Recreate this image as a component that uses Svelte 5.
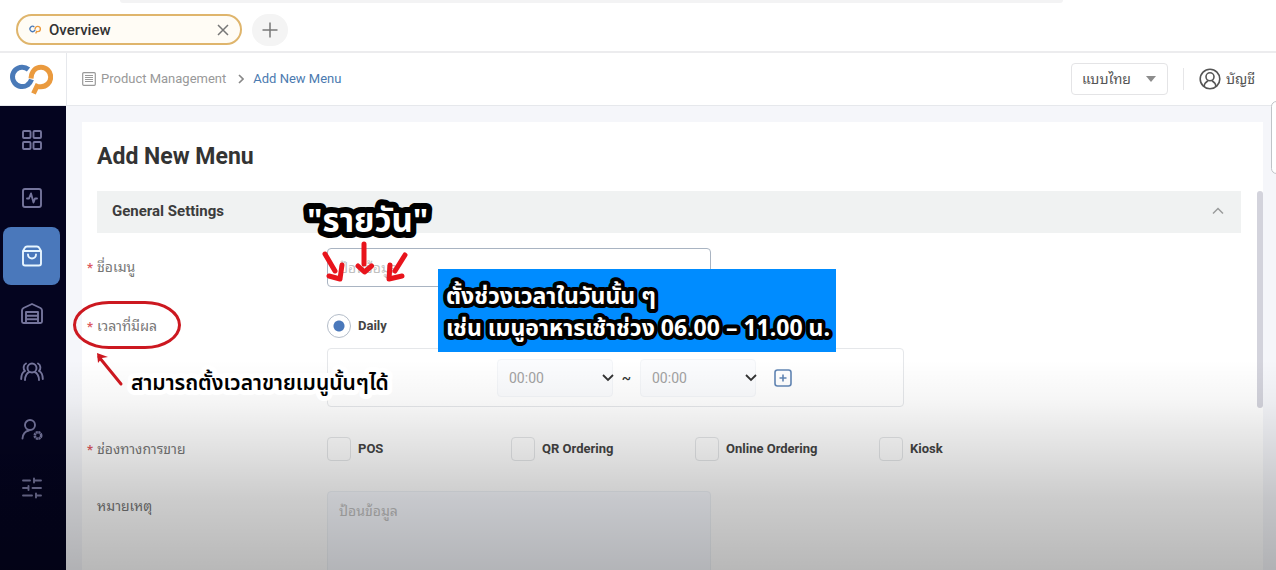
<script>
  const channels = ['POS', 'QR Ordering', 'Online Ordering', 'Kiosk'];
  const nav = ['Dashboard', 'Activity', 'Products', 'Warehouse', 'Customers', 'User settings', 'Preferences'];
  let active = $state(2);
  let open = $state(true);
</script>

{#snippet logo()}
  <svg class="logo" viewBox="0 0 44 32" fill="none" stroke-width="5" aria-hidden="true">
    <path stroke="#4a7ab8" d="M19.500 6.500A9.700 9.700 0 1 0 18.500 22Q21.500 19.500 22.500 16.500" />
    <path stroke="#ea9a3e" d="M22 15.500C22.500 8 26.500 4.300 32 4.300A9.700 9.700 0 0 1 32 23.700H27M29 21L24.500 30.500" />
  </svg>
{/snippet}

<div class="page">
  <div class="tabs">
    <div class="address"></div>
    <div class="tab">
      {@render logo()}
      <span>Overview</span>
      <button class="plain" aria-label="Close tab">
        <svg width="12" height="12" viewBox="0 0 12 12" fill="none" stroke="#777" stroke-width="1.5"><path d="M1 1l10 10M11 1L1 11" /></svg>
      </button>
    </div>
    <button class="newtab" aria-label="New tab">
      <svg width="16" height="16" viewBox="0 0 16 16" fill="none" stroke="#777" stroke-width="1.5"><path d="M8 .5v15M.5 8h15" /></svg>
    </button>
  </div>

  <header>
    <div class="brand">{@render logo()}</div>
    <nav class="crumbs" aria-label="Breadcrumb">
      <svg width="14" height="14" viewBox="0 0 14 14" fill="none" stroke="#999" stroke-width="1.2"><rect x=".7" y=".7" width="12.600" height="12.600" rx="1" /><path stroke-width="1" d="M3 3.500h8M3 5.500h8M3 7.500h8M3 9.500h8" /></svg>
      <a href="#products">Product Management</a>
      <svg class="sep" width="6" height="10" viewBox="0 0 6 10" fill="none" stroke="#888" stroke-width="1.6"><path d="M1 1l4 4-4 4" /></svg>
      <a class="here" href="#new">Add New Menu</a>
    </nav>
    <div class="lang">
      <select aria-label="Language"><option>แบบไทย</option></select>
      <svg width="12" height="8" viewBox="0 0 12 8"><path fill="#8c8c8c" d="M1 1h10L6 7z" /></svg>
    </div>
    <button class="account">
      <svg width="22" height="22" viewBox="0 0 22 22" fill="none" stroke="#555" stroke-width="1.600"><circle cx="11" cy="11" r="9.800" /><circle cx="11" cy="8.800" r="4" /><path d="M5 18.500c.5-3 2.500-5 4-5.800M17 18.500c-.5-3-2.500-5-4-5.800" /></svg>
      <span>บัญชี</span>
    </button>
  </header>

  <div class="body">
    <aside>
      {#each nav as name, i}
        <button class:active={active === i} aria-label={name} onclick={() => (active = i)}>
          <svg width="24" height="24" viewBox="0 0 24 24" fill="none" stroke="currentColor" stroke-width="1.900" stroke-linecap="round" stroke-linejoin="round">
            {#if i === 0}
              <rect x="3" y="3" width="7.500" height="7" rx="1" /><rect x="13.500" y="3" width="7.500" height="7" rx="1" /><rect x="3" y="14" width="7.500" height="7" rx="1" /><rect x="13.500" y="14" width="7.500" height="7" rx="1" />
            {:else if i === 1}
              <rect x="3" y="3" width="18" height="18" rx="2" /><path d="M7 12.500h2l2-5 2.500 9 1.500-4h2" />
            {:else if i === 2}
              <path d="M3 7h18v12.500a2 2 0 0 1-2 2H5a2 2 0 0 1-2-2zM3 7l2-3.500Q5.500 2.500 7 2.500h10q1.500 0 2 1L21 7M8 10.500a4 4 0 0 0 8 0" />
            {:else if i === 3}
              <path d="M6 21H3.500A1.500 1.500 0 0 1 2 19.500V8.500Q2 7 3.500 6L12 2l8.500 4Q22 7 22 8.500v11a1.500 1.500 0 0 1-1.500 1.500H18M6 21V10h12v11zM6 13.700h12M6 17.300h12" />
            {:else if i === 4}
              <circle cx="12" cy="8" r="4.500" /><path d="M5 20c0-4 2-7.500 4.500-8M19 20c0-4-2-7.500-4.500-8M6 3.500C3 5 3 9 5 11c-2 1-3.800 4-3.800 8M18 3.500c3 1.500 3 5.500 1 7.500 2 1 3.800 4 3.800 8" />
            {:else if i === 5}
              <circle cx="10" cy="7" r="5" /><path d="M2.500 20.500c.3-4 2.500-7.200 6.500-8" /><circle cx="18" cy="17.500" r="3.200" stroke-width="2.600" stroke-dasharray="2 .5" stroke-linecap="butt" />
            {:else}
              <path d="M3 4.500h7M14 2.500v4M14 4.500h7M3 12h5M8.500 10v4M12.500 12H21M3 19.500h9M16 17.500v4M16 19.500h5" />
            {/if}
          </svg>
        </button>
      {/each}
    </aside>

    <main>
      <section class="card">
        <h1>Add New Menu</h1>
        <button class="section" aria-expanded={open} onclick={() => (open = !open)}>
          <span>General Settings</span>
          <svg width="12" height="8" viewBox="0 0 12 8" fill="none" stroke="#9a9c9c" stroke-width="1.500"><path d="M1 6.500l5-5 5 5" /></svg>
        </button>
        {#if open}
          <form>
            <label class="name req first" for="menu-name">ชื่อเมนู</label>
            <input class="text" id="menu-name" type="text" placeholder="ป้อนข้อมูล" />

            <span class="name req" id="time-label">เวลาที่มีผล</span>
            <div class="timing" role="radiogroup" aria-labelledby="time-label">
              <label class="choice"><input type="radio" name="time" checked /><span>Daily</span></label>
              <div class="range">
                <div class="time"><select aria-label="From"><option>00:00</option></select><svg width="12" height="8" viewBox="0 0 12 8" fill="none" stroke="#333" stroke-width="1.800"><path d="M1 1l5 5 5-5" /></svg></div>
                <span class="tilde">~</span>
                <div class="time"><select aria-label="To"><option>00:00</option></select><svg width="12" height="8" viewBox="0 0 12 8" fill="none" stroke="#333" stroke-width="1.800"><path d="M1 1l5 5 5-5" /></svg></div>
                <button class="plain add" type="button" aria-label="Add time range">
                  <svg width="18" height="18" viewBox="0 0 18 18" fill="none" stroke="#6286b5" stroke-width="1.600"><rect x="1" y="1" width="16" height="16" rx="2.500" /><path d="M9 5.500v7M5.500 9h7" /></svg>
                </button>
              </div>
            </div>

            <span class="name req" id="channel-label">ช่องทางการขาย</span>
            <div class="channels" role="group" aria-labelledby="channel-label">
              {#each channels as c}
                <label class="choice"><input type="checkbox" /><span>{c}</span></label>
              {/each}
            </div>

            <label class="name note" for="remark">หมายเหตุ</label>
            <textarea id="remark" placeholder="ป้อนข้อมูล"></textarea>
          </form>
        {/if}
        <div class="thumb"></div>
      </section>
    </main>
  </div>

  <div class="drawer"></div>
  <div class="shade"></div>

  <div class="notes">
    <div class="ring"></div>
    <div class="blue"></div>
    <svg class="marks" width="860" height="420" viewBox="0 0 860 420" fill="none" stroke-linecap="round" stroke-linejoin="round">
      <g stroke="#e8141c" stroke-width="5">
        <path d="M325 254l10 17M329 276l11 3 2-14" />
        <path d="M364 244v20M358 266l6.500 6 7-6" />
        <path d="M405 255l-10 16M390 265l-1 14 13-3" />
      </g>
      <path stroke="#cc1820" stroke-width="3" d="M121 384L99 357" /><path fill="#cc1820" d="M97 353l11 4-6 1-4 5z" />
      <g class="white">
        <text class="daily" x="307" y="232">"รายวัน"</text>
        <text class="line" x="446" y="304">ตั้งช่วงเวลาในวันนั้น ๆ</text>
        <text class="line" x="446" y="336">เช่น เมนูอาหารเช้าช่วง 06.00 – 11.00 น.</text>
      </g>
      <text class="sell" x="131" y="390">สามารถตั้งเวลาขายเมนูนั้นๆได้</text>
    </svg>
  </div>
</div>

<style>
  :global(body) { margin: 0; }
  * { box-sizing: border-box; }
  .page { position: relative; height: 100vh; min-height: 400px; overflow: hidden; display: flex; flex-direction: column; background: #fff; font: 14px/20px Roboto, "Noto Sans Thai Looped", "Loma", "Sarabun", "Garuda", "Noto Sans Thai", sans-serif; color: #333; }
  button, input, select, textarea { font: inherit; color: inherit; }
  button { cursor: pointer; border: 0; padding: 0; background: none; }
  .plain { display: flex; }
  a { text-decoration: none; color: inherit; }
  h1 { margin: 0; }

  .tabs { position: relative; flex: none; height: 53px; padding: 8px 16px 0; display: flex; align-items: center; gap: 10px; border-bottom: 2px solid #ececee; }
  .address { position: absolute; top: 0; left: 120px; right: 213px; height: 3px; background: #f3f3f4; border-radius: 0 0 8px 8px; }
  .tab { width: 226px; height: 31px; padding: 0 12px 0 11px; display: flex; align-items: center; border: 2px solid #dfb56c; border-radius: 16px; background: #fffcf5; font-size: 15px; font-weight: 500; color: #333; }
  .tab .logo { width: 12px; height: 9px; margin-right: 8px; }
  .tab span { flex: 1; }
  .tab button { margin-right: -1px; }
  .newtab { width: 36px; height: 32px; border-radius: 16px; background: #f4f4f4; display: grid; place-items: center; }

  header { flex: none; height: 53px; display: flex; align-items: center; padding-right: 21px; border-bottom: 1px solid #e6e8ec; }
  .brand { width: 67px; height: 100%; padding-left: 9px; display: flex; align-items: center; border-right: 1px solid #e6e8ec; }
  .brand .logo { width: 44px; height: 32px; }
  .crumbs { flex: 1; padding-left: 15px; display: flex; align-items: center; font-size: 13px; color: #999; }
  .crumbs a { margin-left: 5px; }
  .crumbs .sep { margin: 0 4px 0 12px; }
  .crumbs .here { color: #4b7ab0; }
  .lang { position: relative; width: 97px; height: 32px; margin-right: 15px; color: #555; }
  .lang select { width: 100%; height: 100%; padding: 0 10px; appearance: none; background: #fff; border: 1px solid #e4e4e6; border-radius: 4px; }
  .lang svg { position: absolute; right: 11px; top: 12px; pointer-events: none; }
  .account { height: 22px; padding-left: 15px; border-left: 1px solid #e6e6e8; display: flex; align-items: center; gap: 5px; color: #555; }

  .body { flex: 1; min-height: 0; display: flex; }
  aside { flex: none; width: 66px; padding: 5px 6px 0 3px; display: flex; flex-direction: column; background: #04041f; }
  aside button { flex: none; height: 58px; border-radius: 8px; color: #75759c; display: grid; place-items: center; }
  aside .active { background: #4a78bb; color: #e8f6ff; }

  main { flex: 1; min-width: 0; padding: 16px 13px 0 16px; background: #f5f6fa; overflow: hidden; }
  .card { position: relative; height: 100%; padding: 21px 22px 0 15px; background: #fff; overflow: hidden; }
  h1 { font-size: 23px; line-height: 28px; font-weight: 700; color: #333; }
  .section { width: 100%; height: 42px; margin-top: 20px; padding: 0 17px 2px 15px; display: flex; align-items: center; justify-content: space-between; background: #f0f2f2; font-size: 15px; font-weight: 700; color: #3c3c3c; }
  form { padding-top: 15px; display: grid; grid-template-columns: 230px 1fr; }
  .name { position: relative; height: 24px; line-height: 24px; color: #777; }
  .first { line-height: 38px; }
  .note { line-height: 30px; }
  .req::before { content: "*"; position: absolute; left: -10px; top: 1px; font-weight: 700; font-size: 13px; color: #dc5a60; }
  .text, textarea { width: 384px; border: 1px solid #a9b4c2; border-radius: 4px; background: #fff; padding: 0 11px; }
  .text { height: 39px; margin-bottom: 27px; }
  textarea { height: 110px; padding-top: 9px; resize: none; border-color: #eef2f6; background: #f8faff; }
  ::placeholder { color: #c0c0c0; opacity: 1; }
  .timing { margin-bottom: 30px; }
  .choice { display: flex; align-items: center; gap: 7px; height: 24px; font-size: 13px; font-weight: 700; color: #444; }
  .choice input { appearance: none; flex: none; width: 24px; height: 24px; margin: 0; border: 1px solid #e4e6e8; border-radius: 4px; background: transparent; }
  .choice input[type="radio"] { border-color: #b4bdc9; border-radius: 50%; background: radial-gradient(circle, #4a78bb 0 5px, #fff 6px); }
  .choice input[type="checkbox"]:checked { background: #4a78bb; }
  .range { width: 577px; max-width: 100%; height: 59px; margin-top: 10px; padding-left: 169px; display: flex; align-items: center; border: 1px solid #e5e7ea; border-radius: 4px; }
  .time { position: relative; width: 116px; height: 38px; }
  .time select { appearance: none; width: 100%; height: 100%; padding: 0 11px; border: 1px solid #f3f5f8; border-radius: 4px; background: #fbfcfe; color: #a2a2a2; }
  .time svg { position: absolute; right: -1px; top: 15px; pointer-events: none; }
  .tilde { width: 27px; text-align: center; font-weight: 500; }
  .add { margin-left: 18px; }
  .channels { display: grid; grid-template-columns: repeat(4, 184px); margin-bottom: 30px; }
  .thumb { position: absolute; right: 0; top: 69px; width: 6px; height: 217px; border-radius: 3px; background: #d3d3dc; }

  .drawer { position: absolute; top: 101px; right: -6px; width: 11px; height: 73px; border: 1px solid #c0c4c8; border-radius: 6px; background: #fff; }
  .shade { position: absolute; left: 0; right: 0; bottom: 0; height: 210px; pointer-events: none; background: linear-gradient(transparent, rgba(0, 0, 0, 0.04) 20%, rgba(0, 0, 0, 0.2) 66%, rgba(0, 0, 0, 0.28)); }

  .notes { position: absolute; inset: 0; pointer-events: none; font-family: "Noto Sans Thai", Roboto, sans-serif; }
  .marks { position: absolute; left: 0; top: 0; }
  .marks text { paint-order: stroke; font-weight: 600; }
  .ring { position: absolute; left: 73px; top: 301px; width: 108px; height: 48px; border: 3px solid #cc1820; border-radius: 36px / 24px; }
  .blue { position: absolute; left: 438px; top: 269px; width: 398px; height: 83px; background: #008cff; }
  .white { fill: #fff; stroke: #000; }
  .marks .daily { font-size: 33px; font-weight: 700; stroke-width: 12px; }
  .marks .line { font-size: 23px; font-weight: 700; stroke-width: 8px; }
  .marks .sell { font-size: 21px; fill: #000; stroke: #fff; stroke-width: 10px; }
</style>
